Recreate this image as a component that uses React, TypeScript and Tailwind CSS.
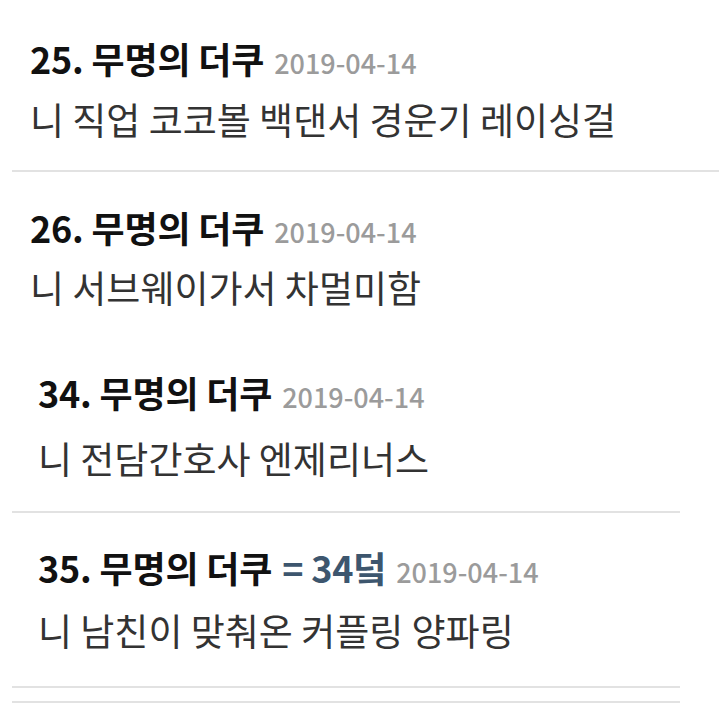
import React from 'react';

type Reply = {
	no: number;
	tag?: string;
	date: string;
	body: string;
};

const font = { fontFamily: '"Noto Sans CJK KR", "Noto Sans", sans-serif' };

const ReplyItem: React.FC<{ reply: Reply; className: string }> = ({ reply, className }) => (
	<div className={className}>
		<div className="flex items-baseline gap-[10px] whitespace-nowrap">
			<span className="text-[36px] leading-[40px] font-bold tracking-[-0.2px] text-[#111]">
				{reply.no}. 무명의 더쿠
			</span>
			{reply.tag && (
				<span className="text-[36px] leading-[40px] font-bold tracking-[-0.2px] text-[#3d566e]">= {reply.tag}</span>
			)}
			<span className="text-[27px] leading-[40px] font-medium text-[#9b9b9b]">{reply.date}</span>
		</div>
		<p className="text-[37px] leading-[44px] text-[#333] whitespace-nowrap">{reply.body}</p>
	</div>
);

const App: React.FC = () => {
	return (
		<div className="w-[719px] h-[705px] overflow-hidden bg-white" style={font}>
			{/* first block: full-width dividers */}
			<div className="pl-[12px]">
				<ReplyItem
					className="pl-[18px] pt-[38px] pb-[29px] border-b-2 border-[#e2e2e2] [&>p]:mt-[14px]"
					reply={{ no: 25, date: '2019-04-14', body: '니 직업 코코볼 백댄서 경운기 레이싱걸' }}
				/>
				<ReplyItem
					className="pl-[18px] pt-[35px] [&>p]:mt-[13px]"
					reply={{ no: 26, date: '2019-04-14', body: '니 서브웨이가서 차멀미함' }}
				/>
			</div>

			{/* second block: narrower dividers */}
			<div className="pl-[12px] pr-[39px] mt-[63px]">
				<ReplyItem
					className="pl-[26px] pb-[31px] border-b-2 border-[#e2e2e2] [&>p]:mt-[19px]"
					reply={{ no: 34, date: '2019-04-14', body: '니 전담간호사 엔제리너스' }}
				/>
				<ReplyItem
					className="pl-[26px] pt-[34px] pb-[34px] border-b-2 border-[#e2e2e2] [&>p]:mt-[16px]"
					reply={{ no: 35, tag: '34덬', date: '2019-04-14', body: '니 남친이 맞춰온 커플링 양파링' }}
				/>
				<div className="mt-[13px] h-[2px] bg-[#e2e2e2]" />
			</div>
		</div>
	);
};

export default App;
